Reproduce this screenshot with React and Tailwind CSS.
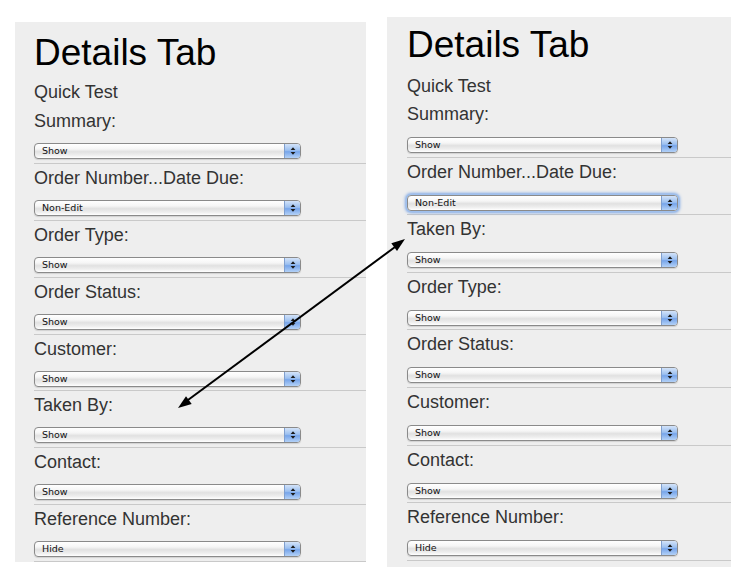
import React from 'react'

const leftRows = [
    { label: 'Summary:', value: 'Show' },
    { label: 'Order Number...Date Due:', value: 'Non-Edit' },
    { label: 'Order Type:', value: 'Show' },
    { label: 'Order Status:', value: 'Show' },
    { label: 'Customer:', value: 'Show' },
    { label: 'Taken By:', value: 'Show' },
    { label: 'Contact:', value: 'Show' },
    { label: 'Reference Number:', value: 'Hide' },
]

const rightRows = [
    { label: 'Summary:', value: 'Show' },
    { label: 'Order Number...Date Due:', value: 'Non-Edit', focused: true },
    { label: 'Taken By:', value: 'Show' },
    { label: 'Order Type:', value: 'Show' },
    { label: 'Order Status:', value: 'Show' },
    { label: 'Customer:', value: 'Show' },
    { label: 'Contact:', value: 'Show' },
    { label: 'Reference Number:', value: 'Hide' },
]

const AquaSelect = ({ value, focused, wide }) => {
    return (
        <div className={`flex h-[16px] items-stretch rounded-[4px] border border-[#8a8a8a] bg-[linear-gradient(to_bottom,#ffffff_0%,#f6f6f6_35%,#e1e1e1_55%,#eeeeee_80%,#ffffff_100%)] ${wide ? 'w-[271px]' : 'w-[267px]'} ${focused ? 'shadow-[0_0_0_1px_#9fc0ee,0_0_3px_2px_#7ea8e6]' : 'shadow-[0_1px_1px_rgba(0,0,0,0.12)]'}`}>
            <span className="flex-1 pl-[7px] font-['DejaVu_Sans',sans-serif] text-[9.5px] leading-[14px] text-[#111]">
                {value}
            </span>
            <span className="flex w-[16px] items-center justify-center rounded-r-[3px] border-l border-[#7f9fcf] bg-[linear-gradient(to_bottom,#d3e3f9_0%,#9cc0f0_45%,#77a5ea_55%,#b3d1f7_100%)]">
                <svg width="6" height="10" viewBox="0 0 6 10">
                    <polygon points="0.6,4 3,1.2 5.4,4" fill="#1a1a1a" />
                    <polygon points="0.6,6 3,8.8 5.4,6" fill="#1a1a1a" />
                </svg>
            </span>
        </div>
    )
}

const FieldRow = ({ row, wide }) => {
    return (
        <div className={`flex flex-col border-b border-[#c9c9c9] ${wide ? 'h-[57.6px]' : 'h-[56.9px]'}`}>
            <div className="text-[18px] leading-[28px] text-[#333333]">{row.label}</div>
            <div className={wide ? 'mt-[9px]' : 'mt-[8px]'}>
                <AquaSelect value={row.value} focused={row.focused} wide={wide} />
            </div>
        </div>
    )
}

const App = () => {
    return (
        <main className="relative h-[587px] w-[756px] overflow-hidden bg-white font-['Liberation_Sans',Arial,sans-serif]">
            <div className="flex items-start">
                {/* left panel: before */}
                <section className="ml-[15px] mt-[22px] h-[540px] w-[351px] overflow-hidden bg-[#eeeeee] pl-[19px] pt-[9px]">
                    <h1 className="text-[37px] leading-[44px] text-black">Details Tab</h1>
                    <div className="mt-[5px] text-[18px] leading-[24px] text-[#333333]">Quick Test</div>
                    <div className="mt-[3px]">
                        {leftRows.map((row) => (
                            <FieldRow key={row.label} row={row} />
                        ))}
                    </div>
                </section>

                {/* right panel: after */}
                <section className="ml-[21px] mt-[17px] h-[550px] w-[344px] overflow-hidden bg-[#eeeeee] pl-[20px] pt-[6px]">
                    <h1 className="text-[37px] leading-[44px] text-black">Details Tab</h1>
                    <div className="mt-[7px] text-[18px] leading-[24px] text-[#333333]">Quick Test</div>
                    <div className="mt-[2px]">
                        {rightRows.map((row) => (
                            <FieldRow key={row.label} row={row} wide />
                        ))}
                    </div>
                </section>
            </div>

            {/* moved field arrow */}
            <svg className="pointer-events-none absolute inset-0" width="756" height="587" viewBox="0 0 756 587">
                <line x1="188" y1="400" x2="395" y2="247" stroke="#000" strokeWidth="2" />
                <polygon points="405,239 397,251 391.3,243.2" fill="#000" />
                <polygon points="178,408 191.7,404 186,396.2" fill="#000" />
            </svg>
        </main>
    )
}

export default App
